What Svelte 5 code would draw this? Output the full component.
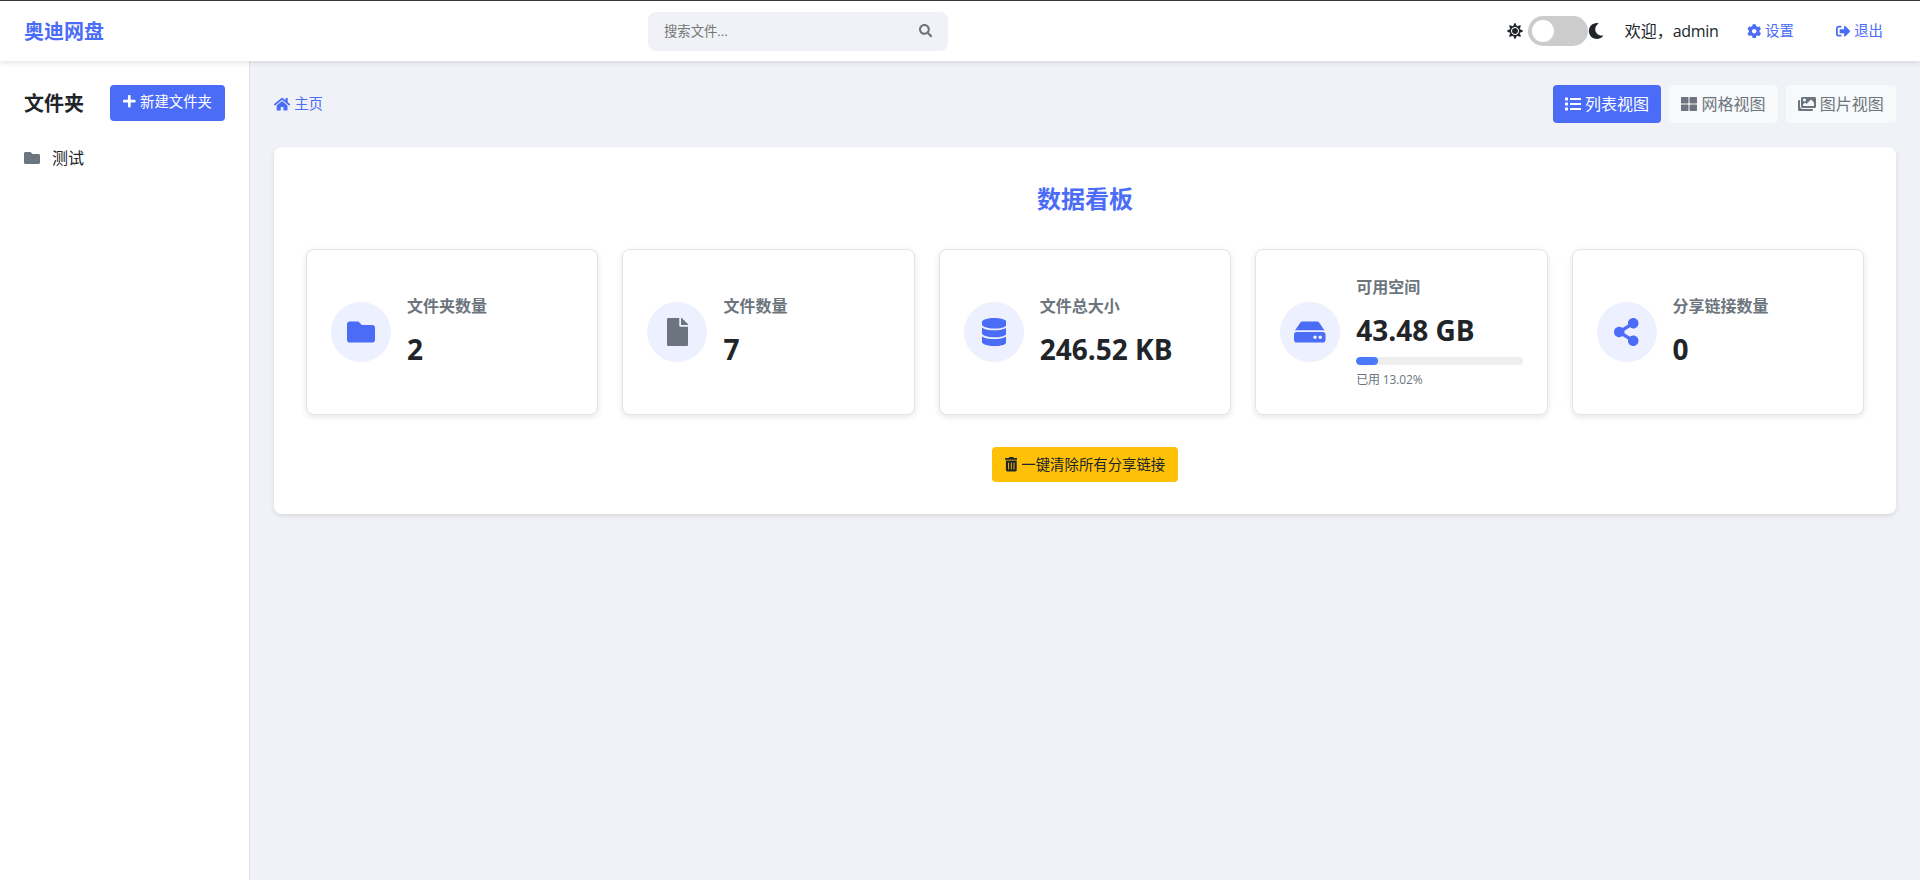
<script>
    const icons = {
        folder: [512, 'M464 128H272l-64-64H48C21.49 64 0 85.49 0 112v288c0 26.51 21.49 48 48 48h416c26.51 0 48-21.49 48-48V176c0-26.51-21.49-48-48-48z'],
        file: [384, 'M224 136V0H24C10.7 0 0 10.7 0 24v464c0 13.3 10.7 24 24 24h336c13.3 0 24-10.7 24-24V160H248c-13.2 0-24-10.8-24-24zm160-14.1v6.1H256V0h6.1c6.4 0 12.5 2.5 17 7l97.9 98c4.5 4.5 7 10.6 7 16.9z'],
        database: [448, 'M448 73.143v45.714C448 159.143 347.667 192 224 192S0 159.143 0 118.857V73.143C0 32.857 100.333 0 224 0s224 32.857 224 73.143zM448 176v102.857C448 319.143 347.667 352 224 352S0 319.143 0 278.857V176c48.125 33.143 136.208 48.572 224 48.572S399.874 209.143 448 176zm0 160v102.857C448 479.143 347.667 512 224 512S0 479.143 0 438.857V336c48.125 33.143 136.208 48.572 224 48.572S399.874 369.143 448 336z'],
        hdd: [576, 'M576 304v96c0 26.51-21.49 48-48 48H48c-26.51 0-48-21.49-48-48v-96c0-26.51 21.49-48 48-48h480c26.51 0 48 21.49 48 48zm-48-80a79.557 79.557 0 0 1 30.777 6.165L462.25 85.374A48.003 48.003 0 0 0 422.311 64H153.689a48 48 0 0 0-39.938 21.374L17.223 230.165A79.557 79.557 0 0 1 48 224h480zm-48 96c-17.673 0-32 14.327-32 32s14.327 32 32 32 32-14.327 32-32-14.327-32-32-32zm-96 0c-17.673 0-32 14.327-32 32s14.327 32 32 32 32-14.327 32-32-14.327-32-32-32z'],
        share: [448, 'M352 320c-22.608 0-43.387 7.819-59.79 20.895l-102.486-64.054a96.551 96.551 0 0 0 0-41.683l102.486-64.054C308.613 184.181 329.392 192 352 192c53.019 0 96-42.981 96-96S405.019 0 352 0s-96 42.981-96 96c0 7.158.79 14.13 2.276 20.841L155.79 180.895C139.387 167.819 118.608 160 96 160c-53.019 0-96 42.981-96 96s42.981 96 96 96c22.608 0 43.387-7.819 59.79-20.895l102.486 64.054A96.301 96.301 0 0 0 256 416c0 53.019 42.981 96 96 96s96-42.981 96-96-42.981-96-96-96z'],
        trash: [448, 'M32 464a48 48 0 0 0 48 48h288a48 48 0 0 0 48-48V128H32zm272-256a16 16 0 0 1 32 0v224a16 16 0 0 1-32 0zm-96 0a16 16 0 0 1 32 0v224a16 16 0 0 1-32 0zm-96 0a16 16 0 0 1 32 0v224a16 16 0 0 1-32 0zM432 32H312l-9.4-18.7A24 24 0 0 0 281.1 0H166.8a23.72 23.72 0 0 0-21.4 13.3L136 32H16A16 16 0 0 0 0 48v32a16 16 0 0 0 16 16h416a16 16 0 0 0 16-16V48a16 16 0 0 0-16-16z'],
        plus: [448, 'M416 208H272V64c0-17.67-14.33-32-32-32h-32c-17.67 0-32 14.33-32 32v144H32c-17.67 0-32 14.33-32 32v32c0 17.67 14.33 32 32 32h144v144c0 17.67 14.33 32 32 32h32c17.67 0 32-14.33 32-32V304h144c17.67 0 32-14.33 32-32v-32c0-17.67-14.33-32-32-32z'],
        search: [512, 'M505 442.7L405.3 343c-4.5-4.5-10.6-7-17-7H372c27.6-35.3 44-79.7 44-128C416 93.1 322.9 0 208 0S0 93.1 0 208s93.1 208 208 208c48.3 0 92.7-16.4 128-44v16.3c0 6.4 2.5 12.5 7 17l99.7 99.7c9.4 9.4 24.6 9.4 33.9 0l28.3-28.3c9.4-9.4 9.4-24.6.1-34zM208 336c-70.7 0-128-57.2-128-128 0-70.7 57.2-128 128-128 70.7 0 128 57.2 128 128 0 70.7-57.2 128-128 128z'],
        home: [576, 'M280.37 148.26L96 300.11V464a16 16 0 0 0 16 16l112.06-.29a16 16 0 0 0 15.92-16V368a16 16 0 0 1 16-16h64a16 16 0 0 1 16 16v95.64a16 16 0 0 0 16 16.05L464 480a16 16 0 0 0 16-16V300L295.67 148.26a12.19 12.19 0 0 0-15.3 0zM571.6 251.47L488 182.56V44.05a12 12 0 0 0-12-12h-56a12 12 0 0 0-12 12v72.61L318.47 43a48 48 0 0 0-61 0L4.34 251.47a12 12 0 0 0-1.6 16.9l25.5 31A12 12 0 0 0 45.15 301l235.22-193.74a12.19 12.19 0 0 1 15.3 0L530.9 301a12 12 0 0 0 16.9-1.6l25.5-31a12 12 0 0 0-1.7-16.93z'],
        cog: [512, 'M487.4 315.7l-42.6-24.6c4.3-23.2 4.3-47 0-70.2l42.6-24.6c4.9-2.8 7.1-8.6 5.5-14-11.1-35.6-30-67.8-54.7-94.6-3.8-4.1-10-5.1-14.8-2.3L380.8 110c-17.9-15.4-38.5-27.3-60.8-35.1V25.8c0-5.6-3.9-10.5-9.4-11.7-36.7-8.2-74.3-7.8-109.2 0-5.5 1.2-9.4 6.1-9.4 11.7V75c-22.2 7.9-42.8 19.8-60.8 35.1L88.7 85.5c-4.9-2.8-11-1.9-14.8 2.3-24.7 26.7-43.6 58.9-54.7 94.6-1.7 5.4.6 11.2 5.5 14L67.3 221c-4.3 23.2-4.3 47 0 70.2l-42.6 24.6c-4.9 2.8-7.1 8.6-5.5 14 11.1 35.6 30 67.8 54.7 94.6 3.8 4.1 10 5.1 14.8 2.3l42.6-24.6c17.9 15.4 38.5 27.3 60.8 35.1v49.2c0 5.6 3.9 10.5 9.4 11.7 36.7 8.2 74.3 7.8 109.2 0 5.5-1.2 9.4-6.1 9.4-11.7v-49.2c22.2-7.9 42.8-19.8 60.8-35.1l42.6 24.6c4.9 2.8 11 1.9 14.8-2.3 24.7-26.7 43.6-58.9 54.7-94.6 1.5-5.5-.7-11.3-5.6-14.1zM256 336c-44.1 0-80-35.9-80-80s35.9-80 80-80 80 35.9 80 80-35.9 80-80 80z'],
        signOut: [512, 'M497 273L329 441c-15 15-41 4.5-41-17v-96H152c-13.300 0-24-10.700-24-24v-96c0-13.300 10.700-24 24-24h136V88c0-21.400 25.900-32 41-17l168 168c9.300 9.400 9.300 24.600 0 34zM192 436v-40c0-6.600-5.400-12-12-12H96c-17.700 0-32-14.300-32-32V160c0-17.700 14.300-32 32-32h84c6.600 0 12-5.400 12-12V76c0-6.600-5.400-12-12-12H96c-53 0-96 43-96 96v192c0 53 43 96 96 96h84c6.600 0 12-5.400 12-12z'],
        sun: [512, 'M256 160c-52.9 0-96 43.1-96 96s43.1 96 96 96 96-43.1 96-96-43.1-96-96-96zm246.4 80.5l-94.7-47.3 33.5-100.4c4.5-13.6-8.4-26.5-21.9-21.9l-100.4 33.5-47.4-94.8c-6.4-12.8-24.6-12.8-31 0l-47.3 94.7L92.7 70.8c-13.6-4.5-26.5 8.4-21.9 21.9l33.5 100.4-94.7 47.4c-12.8 6.4-12.8 24.6 0 31l94.7 47.3-33.5 100.5c-4.5 13.6 8.4 26.5 21.9 21.9l100.4-33.5 47.3 94.7c6.4 12.8 24.6 12.8 31 0l47.3-94.7 100.4 33.5c13.6 4.5 26.5-8.4 21.9-21.9l-33.5-100.4 94.7-47.3c13-6.5 13-24.7.2-31.1zm-155.9 106c-49.9 49.9-131.1 49.9-181 0-49.9-49.9-49.9-131.1 0-181 49.9-49.9 131.1-49.9 181 0 49.9 49.9 49.9 131.1 0 181z'],
        moon: [512, 'M283.211 512c78.962 0 151.079-35.925 198.857-94.792 7.068-8.708-.639-21.43-11.562-19.35-124.203 23.654-238.262-71.576-238.262-196.954 0-72.222 38.662-138.635 101.498-174.394 9.686-5.512 7.25-20.197-3.756-22.23A258.156 258.156 0 0 0 283.211 0c-141.309 0-256 114.511-256 256 0 141.309 114.511 256 256 256z'],
        list: [512, 'M80 368H16a16 16 0 0 0-16 16v64a16 16 0 0 0 16 16h64a16 16 0 0 0 16-16v-64a16 16 0 0 0-16-16zm0-320H16A16 16 0 0 0 0 64v64a16 16 0 0 0 16 16h64a16 16 0 0 0 16-16V64a16 16 0 0 0-16-16zm0 160H16a16 16 0 0 0-16 16v64a16 16 0 0 0 16 16h64a16 16 0 0 0 16-16v-64a16 16 0 0 0-16-16zm416 176H176a16 16 0 0 0-16 16v32a16 16 0 0 0 16 16h320a16 16 0 0 0 16-16v-32a16 16 0 0 0-16-16zm0-320H176a16 16 0 0 0-16 16v32a16 16 0 0 0 16 16h320a16 16 0 0 0 16-16V80a16 16 0 0 0-16-16zm0 160H176a16 16 0 0 0-16 16v32a16 16 0 0 0 16 16h320a16 16 0 0 0 16-16v-32a16 16 0 0 0-16-16z'],
        grid: [512, 'M296 32h192c13.255 0 24 10.745 24 24v160c0 13.255-10.745 24-24 24H296c-13.255 0-24-10.745-24-24V56c0-13.255 10.745-24 24-24zm-80 0H24C10.745 32 0 42.745 0 56v160c0 13.255 10.745 24 24 24h192c13.255 0 24-10.745 24-24V56c0-13.255-10.745-24-24-24zM0 296v160c0 13.255 10.745 24 24 24h192c13.255 0 24-10.745 24-24V296c0-13.255-10.745-24-24-24H24c-13.255 0-24 10.745-24 24zm296 184h192c13.255 0 24-10.745 24-24V296c0-13.255-10.745-24-24-24H296c-13.255 0-24 10.745-24 24v160c0 13.255 10.745 24 24 24z'],
        images: [576, 'M480 416v16c0 26.51-21.49 48-48 48H48c-26.51 0-48-21.49-48-48V176c0-26.51 21.49-48 48-48h16v208c0 44.112 35.888 80 80 80h336zm96-80V80c0-26.51-21.49-48-48-48H144c-26.51 0-48 21.49-48 48v256c0 26.51 21.49 48 48 48h384c26.51 0 48-21.49 48-48zM256 128c0 26.51-21.49 48-48 48s-48-21.49-48-48 21.49-48 48-48 48 21.49 48 48zm-96 144l55.515-55.515c4.686-4.686 12.284-4.686 16.971 0L272 256l135.515-135.515c4.686-4.686 12.284-4.686 16.971 0L512 208v112H160v-48z']
    };

    const views = [
        { id: 'list', label: '列表视图', icon: 'list' },
        { id: 'grid', label: '网格视图', icon: 'grid' },
        { id: 'image', label: '图片视图', icon: 'images' }
    ];

    const stats = [
        { label: '文件夹数量', value: '2', icon: 'folder' },
        { label: '文件数量', value: '7', icon: 'file', muted: true },
        { label: '文件总大小', value: '246.52 KB', icon: 'database' },
        { label: '可用空间', value: '43.48 GB', icon: 'hdd', used: 13.02 },
        { label: '分享链接数量', value: '0', icon: 'share' }
    ];

    const folders = ['测试'];

    let view = $state('list');
    let dark = $state(false);
</script>

{#snippet icon(name)}
    <svg class="icon" viewBox="0 0 {icons[name][0]} 512" style="width: {icons[name][0] / 512}em" aria-hidden="true">
        <path d={icons[name][1]} />
    </svg>
{/snippet}

<div class="app">
    <header class="topbar">
        <h1 class="brand">奥迪网盘</h1>
        <div class="search">
            <input type="text" placeholder="搜索文件..." />
            <button type="button" aria-label="搜索">{@render icon('search')}</button>
        </div>
        <div class="user">
            <div class="theme">
                {@render icon('sun')}
                <label class="switch">
                    <input type="checkbox" bind:checked={dark} />
                    <span class="knob"></span>
                </label>
                {@render icon('moon')}
            </div>
            <span class="welcome">欢迎，<span class="name">admin</span></span>
            <a class="settings" href="#settings">{@render icon('cog')}设置</a>
            <a class="logout" href="#logout">{@render icon('signOut')}退出</a>
        </div>
    </header>

    <div class="body">
        <aside class="sidebar">
            <div class="sidebar-head">
                <h2>文件夹</h2>
                <button type="button" class="btn primary">{@render icon('plus')}<span class="text">新建文件夹</span></button>
            </div>
            <ul>
                {#each folders as folder}
                    <li>{@render icon('folder')}<span>{folder}</span></li>
                {/each}
            </ul>
        </aside>

        <main>
            <div class="toolbar">
                <a class="crumb" href="#home">{@render icon('home')}主页</a>
                <div class="views">
                    {#each views as v}
                        <button type="button" class="view" class:active={view === v.id} onclick={() => (view = v.id)}>
                            {@render icon(v.icon)}<span class="text">{v.label}</span>
                        </button>
                    {/each}
                </div>
            </div>

            <section class="dashboard">
                <h2>数据看板</h2>
                <div class="cards">
                    {#each stats as stat}
                        <div class="card">
                            <div class="badge" class:muted={stat.muted}>{@render icon(stat.icon)}</div>
                            <div class="info">
                                <h3>{stat.label}</h3>
                                <p class="value">{stat.value}</p>
                                {#if stat.used}
                                    <div class="progress"><div class="bar" style="width: {stat.used}%"></div></div>
                                    <p class="used">已用 <span>{stat.used}%</span></p>
                                {/if}
                            </div>
                        </div>
                    {/each}
                </div>
                <button type="button" class="btn warning">{@render icon('trash')}<span class="text">一键清除所有分享链接</span></button>
            </section>
        </main>
    </div>
</div>

<style>
    :global(body) {
        margin: 0;
    }

    .app {
        display: flex;
        flex-direction: column;
        height: 100vh;
        box-sizing: border-box;
        border-top: 1px solid #38363b;
        overflow: hidden;
        background: #f0f2f8;
        color: #212529;
        font-family: "Open Sans", "Noto Sans CJK SC", sans-serif;
        font-size: 16px;
        line-height: 24px;
    }

    h1, h2, h3, p, ul {
        margin: 0;
        padding: 0;
    }

    button, input {
        font-family: inherit;
        border: none;
    }

    button {
        cursor: pointer;
    }

    a {
        color: #4a6cf7;
        text-decoration: none;
    }

    .icon {
        height: 1em;
        flex: none;
        fill: currentColor;
    }

    /* optical centering of the labels inside buttons */
    .text {
        padding-bottom: 2px;
    }

    .topbar {
        display: flex;
        align-items: center;
        justify-content: space-between;
        height: 60px;
        flex: none;
        padding: 0 24px;
        background: #fff;
        box-shadow: 0 2px 5px rgba(0, 0, 0, 0.1);
        z-index: 1;
    }

    .brand {
        padding-top: 2px;
        color: #4a6cf7;
        font-size: 20px;
        font-weight: 700;
    }

    .search {
        display: flex;
        align-items: center;
        width: 300px;
        height: 39px;
        border-radius: 8px;
        background: #f0f2f8;
    }

    .search input {
        flex: 1;
        min-width: 0;
        padding: 0 16px;
        background: none;
        outline: none;
        font-size: 13.33px;
    }

    .search input::placeholder {
        color: #757575;
    }

    .search button {
        display: flex;
        padding: 0 16px;
        background: none;
        color: #6c757d;
        font-size: 13.33px;
    }

    .user {
        display: flex;
        align-items: center;
        justify-content: flex-end;
        width: 404px;
    }

    .theme {
        display: flex;
        align-items: center;
    }

    .switch {
        display: flex;
        box-sizing: border-box;
        width: 60px;
        height: 30px;
        margin-left: 5px;
        padding: 4px;
        border-radius: 30px;
        background: #ccc;
    }

    .switch input {
        display: none;
    }

    .knob {
        width: 22px;
        height: 22px;
        border-radius: 50%;
        background: #fff;
    }

    .switch input:checked + .knob {
        margin-left: auto;
    }

    .welcome {
        margin-left: 21px;
        white-space: nowrap;
    }

    .name {
        letter-spacing: -0.3px;
    }

    .user a {
        display: flex;
        align-items: center;
        gap: 4px;
        font-size: 14.4px;
    }

    .settings {
        margin-left: 28px;
    }

    .logout {
        margin: 0 13px 0 42px;
    }

    .body {
        display: flex;
        flex: 1;
        min-height: 0;
    }

    .sidebar {
        box-sizing: border-box;
        width: 250px;
        flex: none;
        padding: 24px;
        background: #fff;
        border-right: 1px solid #e0e2e8;
    }

    .sidebar-head {
        display: flex;
        align-items: center;
        justify-content: space-between;
        height: 36px;
    }

    .sidebar-head h2 {
        padding-top: 2px;
        font-size: 20px;
        font-weight: 700;
    }

    .btn {
        display: flex;
        align-items: center;
        justify-content: center;
        gap: 4px;
        padding: 0 13px;
        border-radius: 4px;
        font-size: 14.4px;
        white-space: nowrap;
    }

    .primary {
        height: 36px;
        padding-bottom: 3px;
        background: #4a6cf7;
        color: #fff;
    }

    .warning {
        height: 35px;
        margin: 32px auto 0;
        background: #ffc107;
        color: #212529;
    }

    .sidebar ul {
        margin-top: 25px;
        list-style: none;
    }

    .sidebar li {
        display: flex;
        align-items: center;
        gap: 12px;
    }

    .sidebar li .icon {
        color: #6c757d;
    }

    main {
        flex: 1;
        padding: 24px;
    }

    .toolbar {
        display: flex;
        align-items: center;
        justify-content: space-between;
        height: 38px;
    }

    .crumb {
        display: flex;
        align-items: center;
        gap: 4px;
        font-size: 14.4px;
    }

    .views {
        display: flex;
        gap: 8px;
    }

    .view {
        display: flex;
        align-items: center;
        gap: 4px;
        height: 38px;
        padding: 0 12.2px;
        border-radius: 4px;
        background: #f8f9fa;
        color: #6c757d;
        font-size: 16px;
    }

    .view.active {
        background: #4a6cf7;
        color: #fff;
    }

    .dashboard {
        margin-top: 24px;
        padding: 32px;
        border-radius: 8px;
        background: #fff;
        box-shadow: 0 2px 5px rgba(0, 0, 0, 0.1);
    }

    .dashboard h2 {
        margin-bottom: 31px;
        padding-top: 1px;
        color: #4a6cf7;
        font-size: 24px;
        font-weight: 700;
        line-height: 38px;
        text-align: center;
    }

    .cards {
        display: grid;
        grid-template-columns: repeat(5, 1fr);
        gap: 24px;
    }

    .card {
        display: flex;
        align-items: center;
        gap: 16px;
        box-sizing: border-box;
        height: 166px;
        padding: 24px;
        border: 1px solid #e4e5e8;
        border-radius: 8px;
        background: #fff;
        box-shadow: 0 2px 6px rgba(0, 0, 0, 0.1);
    }

    .badge {
        display: flex;
        align-items: center;
        justify-content: center;
        width: 60px;
        height: 60px;
        flex: none;
        border-radius: 50%;
        background: #edf0fe;
        color: #4a6cf7;
        font-size: 28px;
    }

    .badge.muted {
        color: #6c757d;
    }

    .info {
        flex: 1;
        min-width: 0;
    }

    .info h3 {
        margin-bottom: 8px;
        color: #6c757d;
        font-size: 16px;
        font-weight: 700;
        line-height: 26px;
    }

    .value {
        font-size: 28px;
        font-weight: 700;
        line-height: 45px;
    }

    .progress {
        height: 8px;
        margin-top: 4px;
        border-radius: 4px;
        background: #eee;
        overflow: hidden;
    }

    .bar {
        height: 100%;
        border-radius: 4px;
        background: #4a7af5;
    }

    .used {
        margin-top: 5px;
        color: #6c757d;
        font-size: 12px;
        line-height: 20px;
        letter-spacing: -0.15px;
    }
</style>
